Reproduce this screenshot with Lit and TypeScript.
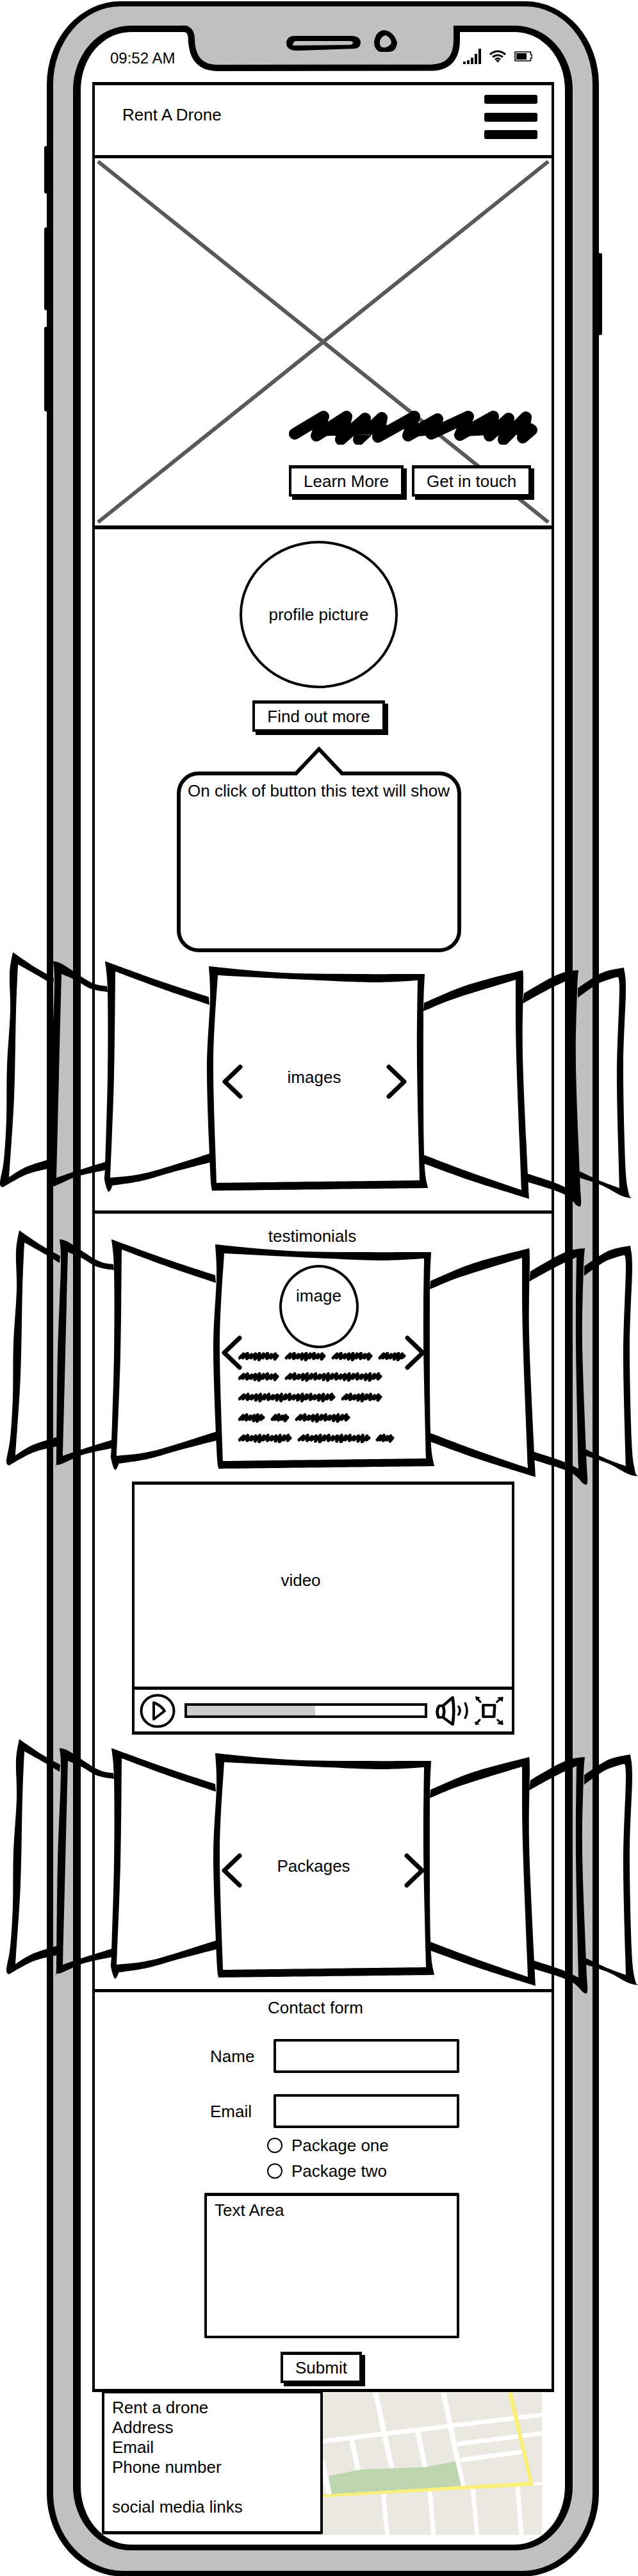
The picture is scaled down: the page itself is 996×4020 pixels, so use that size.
import { LitElement, html, svg, css } from "lit";
import { customElement, property, state } from "lit/decorators.js";

type Point = [number, number];

/** Smooths each edge on its own, so corners between edges stay sharp. */
function outline(edges: Point[][]): string {
  let d = "";
  edges.forEach((edge, n) => {
    if (n === 0) d += `M${edge[0][0]} ${edge[0][1]}`;
    else d += `L${edge[0][0]} ${edge[0][1]}`;
    for (let i = 0; i < edge.length - 1; i++) {
      const p0 = edge[Math.max(i - 1, 0)];
      const p1 = edge[i];
      const p2 = edge[i + 1];
      const p3 = edge[Math.min(i + 2, edge.length - 1)];
      const c = [
        p1[0] + (p2[0] - p0[0]) / 6,
        p1[1] + (p2[1] - p0[1]) / 6,
        p2[0] - (p3[0] - p1[0]) / 6,
        p2[1] - (p3[1] - p1[1]) / 6,
      ].map((v) => Math.round(v * 10) / 10);
      d += `C${c[0]} ${c[1]} ${c[2]} ${c[3]} ${p2[0]} ${p2[1]}`;
    }
  });
  return d + "Z";
}

const CARDS: string[] = [
  // far left
  outline([
    [[84, 46], [54, 29], [20, 6]],
    [[20, 6], [15, 39], [16, 99], [11, 183], [10, 266], [6, 330], [0, 366], [4, 373]],
    [[4, 373], [41, 353], [79, 343]],
    [[81, 328], [41, 341], [14, 357]],
    [[14, 357], [22, 233], [25, 99], [28, 25]],
    [[28, 25], [60, 43], [83, 57]],
  ]),
  // middle left
  outline([
    [[167, 59], [142, 53], [98, 25], [83, 20]],
    [[83, 20], [85, 59], [80, 199], [78, 359], [77, 371]],
    [[77, 371], [85, 371], [120, 356], [165, 346]],
    [[165, 333], [117, 348], [88, 358]],
    [[88, 358], [92, 199], [96, 40]],
    [[96, 40], [117, 49], [142, 63], [168, 68]],
  ]),
  // near left
  outline([
    [[326, 76], [250, 51], [164, 20]],
    [[164, 20], [168, 67], [168, 200], [164, 340], [163, 360], [168, 378], [172, 378], [176, 369]],
    [[176, 370], [220, 363], [270, 349], [328, 334]],
    [[328, 320], [230, 350], [172, 358]],
    [[172, 358], [178, 200], [180, 36]],
    [[180, 36], [250, 62], [327, 88]],
  ]),
  // near right
  outline([
    [[662, 85], [730, 57], [816, 34]],
    [[816, 34], [817, 53], [816, 167], [823, 333], [826, 391]],
    [[826, 391], [737, 363], [662, 336]],
    [[661, 322], [730, 348], [814, 377]],
    [[814, 377], [806, 167], [805, 49]],
    [[805, 49], [711, 78], [661, 98]],
  ]),
  // middle right
  outline([
    [[818, 70], [858, 47], [882, 37], [903, 34]],
    [[903, 34], [901, 66], [899, 183], [905, 353], [907, 399], [900, 401]],
    [[900, 401], [879, 383], [822, 364]],
    [[822, 351], [867, 366], [893, 378]],
    [[893, 378], [889, 183], [890, 48]],
    [[890, 48], [858, 63], [816, 86]],
  ]),
  // far right
  outline([
    [[902, 62], [940, 38], [974, 30]],
    [[974, 30], [977, 66], [973, 183], [976, 333], [981, 380], [986, 390]],
    [[986, 390], [970, 386], [940, 370], [905, 358]],
    [[905, 348], [940, 364], [967, 374]],
    [[967, 374], [963, 200], [967, 62], [962, 45]],
    [[962, 45], [934, 55], [902, 77]],
  ]),
  // front
  outline([
    [[326, 28], [440, 38], [550, 40], [663, 40]],
    [[663, 40], [661, 110], [662, 320], [668, 374]],
    [[668, 374], [331, 378]],
    [[331, 378], [328, 345], [323, 190], [328, 80], [326, 28]],
  ]) +
    outline([
      [[340, 42], [333, 180], [338, 366]],
      [[338, 366], [655, 362]],
      [[655, 362], [651, 180], [652, 50]],
      [[652, 50], [580, 53], [480, 49], [340, 42]],
    ]),
];

const deck = html`<svg class="deck" viewBox="0 6 996 403" preserveAspectRatio="none" aria-hidden="true">
  ${CARDS.map((d) => svg`<path d=${d} fill-rule="evenodd" />`)}
</svg>`;

const HERO_SCRIBBLE =
  "M9 36L54 9L43 39L90 9L81 45L119 12L109 45L145 11L139 41L196 9L186 39L232 13L222 36L280 9L267 38L319 9L313 39L343 12L335 45L370 10L365 42L379 30M50 31L83 29L146 28M190 32L232 28M272 31L312 29L376 28";

/** A run of tight pen strokes standing in for one word. */
function word(x: number, y: number, width: number): string {
  const tops = [1, 0, 2, 1, 0];
  const feet = [9, 11, 10, 12, 9];
  const steps = Math.max(3, Math.round(width / 7));
  const step = (width - 8) / steps;
  let d = `M${x + 2} ${y + 9}`;
  for (let i = 0; i < steps; i++) {
    const right = x + 2 + step * (i + 1);
    d += `L${right.toFixed(1)} ${y + 2 + tops[i % 5]}L${(right - 1).toFixed(1)} ${y + feet[(i * 2) % 5]}`;
  }
  return d + `L${x + width - 3} ${y + 6}`;
}

const QUOTE: Point[][] = [
  [[0, 64], [73, 64], [146, 64], [219, 43]],
  [[0, 64], [73, 152]],
  [[0, 152], [161, 64]],
  [[0, 42], [51, 29], [89, 86]],
  [[0, 84], [93, 114], [215, 29]],
];

@customElement("arrow-button")
class ArrowButton extends LitElement {
  @property() side = "left";
  static styles = css`
    :host { display: block; flex: none; }
    button { display: block; padding: 0; border: 0; background: none; cursor: pointer; }
    svg { display: block; width: 32px; height: 54px; fill: none; stroke: #000; stroke-width: 7; stroke-linecap: round; stroke-linejoin: round; }
  `;
  render() {
    const left = this.side === "left";
    return html`<button type="button" aria-label=${left ? "Previous" : "Next"}>
      <svg viewBox="0 0 32 54"><path d=${left ? "M28 4L4 27L28 50" : "M4 4L28 27L4 50"} /></svg>
    </button>`;
  }
}

@customElement("app-root")
class AppRoot extends LitElement {
  @state() progress = 54;

  static styles = css`
    :host { display: block; background: #fff; color: #000; font: 26px/30px "Liberation Sans", Arial, sans-serif; }
    * { box-sizing: border-box; }
    h1, h2, p { margin: 0; font: inherit; }
    svg { display: block; }
    input, textarea, button { font: inherit; color: inherit; }

    .page { padding: 2px 61px 0 73px; overflow: hidden; }
    .phone { position: relative; padding: 30px 31px 32px; border: solid #000; border-width: 8px 10px 9px; border-radius: 115px 115px 120px 120px / 130px; background: #c0c0c0; }
    .key { position: absolute; width: 7px; background: #000; border-radius: 3px; }
    .key.mute { left: -14px; top: 218px; height: 74px; }
    .key.up { left: -14px; top: 345px; height: 129px; }
    .key.down { left: -14px; top: 500px; height: 132px; }
    .key.power { right: -15px; top: 385px; height: 128px; }
    .screen { padding: 0 17px 15px 18px; border: solid #000; border-width: 10px 12px 9px; border-radius: 90px / 100px; background: #fff; }
    .notch { position: absolute; top: 28px; left: 50%; width: 440px; height: 76px; margin-left: -224px; }

    .status { display: flex; justify-content: space-between; align-items: flex-start; height: 78px; padding: 26px 34px 0 28px; font-size: 24px; }
    .status svg { width: 108px; height: 24px; }

    .app { border: solid #000; border-width: 5px 4px; }
    header { display: flex; justify-content: space-between; height: 109px; padding: 15px 22px 0 43px; line-height: 62px; }
    .menu { display: flex; flex-direction: column; justify-content: space-between; width: 83px; height: 69px; padding: 0; border: 0; background: none; }
    .menu i { display: block; width: 100%; height: 14px; border-radius: 3px; background: #000; }

    .hero { position: relative; display: flex; justify-content: flex-end; align-items: flex-end; height: 584px; padding: 0 22px 45px; border: solid #000; border-width: 5px 0 6px; }
    .cross { position: absolute; left: 0; top: 0; width: 100%; height: 100%; stroke: #595959; stroke-width: 6; }
    .pitch { position: relative; display: flex; flex-direction: column; gap: 32px; }
    .pitch svg { width: 388px; height: 53px; fill: none; stroke: #000; stroke-width: 18; stroke-linecap: round; stroke-linejoin: round; }
    .actions { display: flex; gap: 13px; }
    .btn { height: 49px; padding: 0 19px; border: 4px solid #000; border-top-width: 5px; background: #fff; box-shadow: 5px 5px 0 #000; line-height: 38px; white-space: nowrap; }

    .about { display: flex; flex-direction: column; align-items: center; padding: 18px 14px 0 0; }
    .avatar { display: flex; align-items: center; justify-content: center; width: 247px; height: 230px; margin-bottom: 19px; border: 4px solid #000; border-radius: 50%; }
    .bubble { position: relative; width: 444px; height: 282px; margin-top: 62px; padding: 9px 0; border: 6px solid #000; border-radius: 34px; text-align: center; white-space: nowrap; }
    .bubble svg { position: absolute; top: -46px; left: 50%; width: 80px; height: 47px; margin-left: -40px; }

    .stage { position: relative; display: flex; align-items: center; justify-content: center; }
    .stage > * { position: relative; }
    .stage > .deck { position: absolute; left: -148px; width: calc(100% + 283px); height: 403px; }
    .label { text-align: center; padding-bottom: 14px; }
    .images { height: 403px; padding-right: 28px; }
    .images .deck { top: 0; }
    .images .label { width: 224px; }

    .block { border-top: 5px solid #000; }
    .title { padding-right: 24px; text-align: center; }
    .reviews .title { padding-top: 20px; padding-right: 34px; }
    .quotes { align-items: flex-start; height: 368px; padding-top: 30px; }
    .quotes .deck { top: -24px; }
    .stage.quotes > .deck, .stage.packages > .deck { left: -138px; }
    .quotes arrow-button { margin-top: 110px; }
    .quote { width: 254px; }
    .face { display: flex; align-items: center; justify-content: center; width: 124px; height: 130px; margin: 0 0 6px 58px; padding-bottom: 34px; border: 4px solid #000; border-radius: 50%; }
    .quote svg { width: 264px; height: 142px; margin-left: -6px; fill: none; stroke: #000; stroke-width: 5; stroke-linecap: round; stroke-linejoin: round; }

    .video { width: 597px; height: 395px; margin: 0 auto; border: solid #000; border-width: 5px 4px; background: #fff; display: flex; flex-direction: column; }
    .frame { flex: 1; display: flex; align-items: center; justify-content: center; padding: 0 70px 18px 0; }
    .controls { display: flex; align-items: center; height: 70px; padding: 0 11px 0 8px; border-top: 5px solid #000; }
    .controls button { flex: none; padding: 0; border: 0; background: none; }
    .controls svg { fill: none; stroke: #000; stroke-width: 4; stroke-linejoin: round; stroke-linecap: round; }
    .play { width: 56px; height: 54px; }
    .sound { width: 52px; height: 48px; margin-right: 9px; }
    .full { width: 47px; height: 48px; }
    .seek { flex: 1; min-width: 0; height: 23px; margin: 0 13px 0 14px; appearance: none; border: 4px solid #000; background: linear-gradient(#ccc, #ccc) no-repeat left / var(--played) 100%; }
    .seek::-webkit-slider-thumb { appearance: none; width: 1px; height: 15px; background: none; }

    .packages { height: 397px; padding-top: 26px; }
    .packages .deck { top: 7px; }
    .packages .label { width: 253px; padding-right: 30px; }

    .contact { padding: 9px 0 9px; }
    form { width: 425px; margin: 34px auto 0; padding-left: 27px; }
    .field { display: grid; grid-template-columns: 108px 1fr; align-items: center; margin-bottom: 33px; }
    .field label { padding-left: 9px; }
    .field input { width: 100%; height: 53px; padding: 0 12px; border: 4px solid #000; border-radius: 2px; background: #fff; }
    .field + .choices { margin-top: -26px; }
    .choices { margin: 0 0 14px 98px; padding: 0; border: 0; }
    .choice { display: flex; align-items: center; gap: 14px; height: 40px; }
    .choice input { appearance: none; width: 24px; height: 24px; margin: 0; border: 2px solid #000; border-radius: 50%; background: #fff; }
    textarea { display: block; width: 100%; height: 227px; padding: 7px 12px; border: 4px solid #000; border-top-width: 5px; border-radius: 2px; background: #fff; resize: none; }
    textarea::placeholder { color: #000; opacity: 1; }
    .submit { display: block; margin: 21px 0 0 119px; }

    footer { position: relative; display: grid; grid-template-columns: 345px 1fr; margin: -3px 19px 0 15px; }
    address { height: 225px; padding: 7px 12px; border: solid #000; border-width: 5px 4px; border-radius: 2px; background: #fff; font-style: normal; line-height: 31px; }
    address .social { margin-top: 31px; }
    .map { width: 100%; height: 222px; margin-top: 4px; }
  `;

  private seek(e: Event) {
    this.progress = Number((e.target as HTMLInputElement).value);
  }

  render() {
    return html`<div class="page"><div class="phone">
      <i class="key mute"></i><i class="key up"></i><i class="key down"></i><i class="key power"></i>
      <div class="screen">
        <div class="status">
          <span>09:52 AM</span>
          <svg viewBox="0 0 108 24" aria-hidden="true">
            <path d="M0 20h4v4H0zM6 18h4v6H6zM12 14h4v10h-4zM18 8h4v16h-4zM24 0h4v24h-4z" />
            <g fill="none" stroke="#000" stroke-width="3"><path d="M42 9Q54 -1 66 9" /><path d="M46 13Q54 7 62 13" /><path d="M50 17Q54 13 58 17" /></g>
            <path d="M51 18.500L54 21.500L57 18.500Q54 16.500 51 18.500" />
            <path d="M81 5h24.500v4.500h2v5h-2V19H81Z" fill="none" stroke="#000" stroke-width="1.600" stroke-linejoin="round" />
            <path d="M83 7h16v10H83z" />
          </svg>
        </div>

        <main class="app">
          <header>
            <h1>Rent A Drone</h1>
            <button class="menu" type="button" aria-label="Menu"><i></i><i></i><i></i></button>
          </header>

          <section class="hero">
            <svg class="cross" viewBox="0 0 713 573" preserveAspectRatio="none" aria-hidden="true"><path d="M5 5L708 568M708 5L5 568" /></svg>
            <div class="pitch">
              <svg viewBox="0 0 388 53" aria-hidden="true"><path d=${HERO_SCRIBBLE} /></svg>
              <div class="actions">
                <button class="btn" type="button">Learn More</button>
                <button class="btn" type="button">Get in touch</button>
              </div>
            </div>
          </section>

          <section class="about">
            <div class="avatar">profile picture</div>
            <button class="btn" type="button">Find out more</button>
            <div class="bubble">
              <svg viewBox="0 0 80 47" aria-hidden="true"><path d="M5 40H75V47H5Z" fill="#fff" /><path d="M0 43H4L40 5L76 43H80" fill="none" stroke="#000" stroke-width="6" /></svg>
              On click of button this text will show
            </div>
          </section>

          <section class="stage images">
            ${deck}
            <arrow-button side="left"></arrow-button>
            <p class="label">images</p>
            <arrow-button side="right"></arrow-button>
          </section>

          <section class="block reviews">
            <h2 class="title">testimonials</h2>
            <div class="stage quotes">
              ${deck}
              <arrow-button side="left"></arrow-button>
              <div class="quote">
                <div class="face">image</div>
                <svg viewBox="0 0 264 142" aria-hidden="true">
                  ${QUOTE.map((line, row) => line.map(([x, w]) => svg`<path d=${word(x, row * 32, w)} />`))}
                </svg>
              </div>
              <arrow-button side="right"></arrow-button>
            </div>

            <div class="video">
              <div class="frame">video</div>
              <div class="controls">
                <button type="button" aria-label="Play">
                  <svg class="play" viewBox="0 0 56 54" aria-hidden="true"><ellipse cx="28" cy="27" rx="25.500" ry="24.500" /><path d="M22 14V40L39 27Q33 18 22 14Z" /></svg>
                </button>
                <input class="seek" type="range" min="0" max="100" aria-label="Seek" .value=${String(this.progress)} @input=${this.seek} style="--played:${this.progress}%" />
                <button type="button" aria-label="Volume">
                  <svg class="sound" viewBox="0 0 45 48" preserveAspectRatio="none" aria-hidden="true"><path d="M10 16L23 3Q26 24 23 45L10 34" /><path d="M10 16H5Q0 24 4 34H10Q13 25 10 16Z" /><path d="M31 17Q35 23 31 30M40 12Q45 24 40 35" stroke-width="3" /></svg>
                </button>
                <button type="button" aria-label="Full screen">
                  <svg class="full" viewBox="0 0 42 48" preserveAspectRatio="none" aria-hidden="true"><path d="M12 15H28L27 33H12Z" /><path d="M8 10L3 4M31 10L37 4M7 38L3 43M32 38L37 43" stroke-width="3" /><path d="M1 1L8 3L2 8ZM40 2L31 3L39 10ZM1 46L0 40L7 45ZM40 46L39 38L31 44Z" fill="#000" stroke="none" /></svg>
                </button>
              </div>
            </div>

            <div class="stage packages">
              ${deck}
              <arrow-button side="left"></arrow-button>
              <p class="label">Packages</p>
              <arrow-button side="right"></arrow-button>
            </div>
          </section>

          <section class="block contact">
            <h2 class="title">Contact form</h2>
            <form>
              <div class="field"><label for="name">Name</label><input id="name" type="text" /></div>
              <div class="field"><label for="email">Email</label><input id="email" type="email" /></div>
              <fieldset class="choices" aria-label="Package">
                <label class="choice"><input type="radio" name="package" />Package one</label>
                <label class="choice"><input type="radio" name="package" />Package two</label>
              </fieldset>
              <textarea placeholder="Text Area" aria-label="Text Area"></textarea>
              <button class="btn submit" type="button">Submit</button>
            </form>
          </section>
        </main>

        <footer>
          <address>
            <p>Rent a drone</p>
            <p>Address</p>
            <p>Email</p>
            <p>Phone number</p>
            <p class="social">social media links</p>
          </address>
          <svg class="map" viewBox="0 0 342 222" preserveAspectRatio="none" role="img" aria-label="Map">
            <path d="M0 0H342V222H0Z" fill="#ebe8e1" />
            <g fill="none" stroke="#fff" stroke-width="8">
              <path d="M82 -2L108 120M188 -2L219 148M45 73L55 121M148 60L160 118M-1 106L10 162" />
              <path d="M-2 76L344 34M210 80L344 63M215 105L312 92" stroke-width="7" />
              <path d="M94 156L101 224M167 152L173 224M234 149L241 224M304 146L310 224" stroke-width="7" />
              <path d="M325 143L344 141" stroke-width="5" />
            </g>
            <path d="M9 130L58 120L108 118L160 116L207 107L216 146L14 158Z" fill="#bcd5ae" />
            <path d="M0 159L322 139L289 0H296L329 145L0 163Z" fill="#faef77" />
          </svg>
        </footer>
      </div>

      <svg class="notch" viewBox="278 38 440 76" aria-hidden="true">
        <path d="M291 38V66L300 92Q308 106 335 106H673Q711 103 711 62V38Z" fill="#c0c0c0" />
        <path d="M281 45Q296 43 297 60Q297 106 338 106L673 105.500Q711 104 711 62V45H718" fill="none" stroke="#000" stroke-width="10" />
        <path d="M458 56H548Q561 57 561 67Q560 76 550 76L462 79Q445 79 445 67Q446 56 458 56ZM459 64Q455 66 455 71L545 70Q550 68 549 66Q548 64 544 64Z" fill-rule="evenodd" />
        <path d="M597 47Q612 48 618 66Q617 80 606 81H591Q582 77 582 66Q584 49 597 47ZM600 55Q593 57 591 64Q590 72 595 74H600Q609 71 609 65Q606 57 600 55Z" fill-rule="evenodd" />
      </svg>
    </div></div>`;
  }
}
